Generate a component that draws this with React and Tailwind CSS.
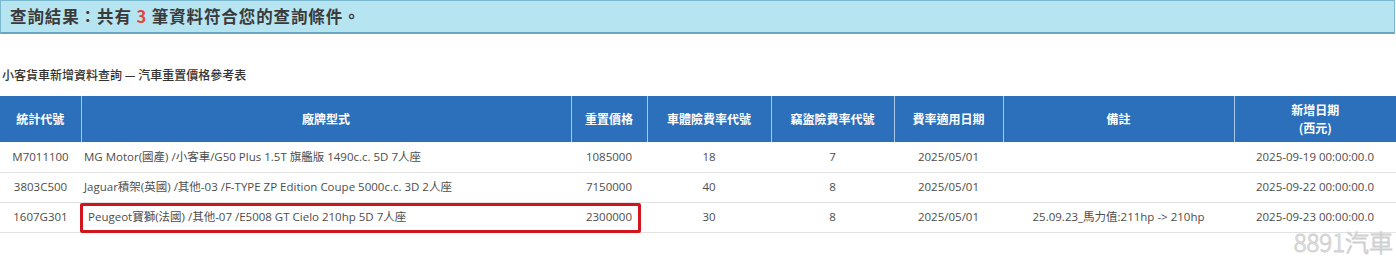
import React from "react";

const rows = [
  {
    code: "M7011100",
    model: "MG Motor(國產) /小客車/G50 Plus 1.5T 旗艦版 1490c.c. 5D 7人座",
    price: "1085000",
    body: "18",
    theft: "7",
    date: "2025/05/01",
    note: "",
    added: "2025-09-19 00:00:00.0",
    hl: false,
  },
  {
    code: "3803C500",
    model: "Jaguar積架(英國) /其他-03 /F-TYPE ZP Edition Coupe 5000c.c. 3D 2人座",
    price: "7150000",
    body: "40",
    theft: "8",
    date: "2025/05/01",
    note: "",
    added: "2025-09-22 00:00:00.0",
    hl: false,
  },
  {
    code: "1607G301",
    model: "Peugeot寶獅(法國) /其他-07 /E5008 GT Cielo 210hp 5D 7人座",
    price: "2300000",
    body: "30",
    theft: "8",
    date: "2025/05/01",
    note: "25.09.23_馬力值:211hp -> 210hp",
    added: "2025-09-23 00:00:00.0",
    hl: true,
  },
];

const font = "font-['Open_Sans','Noto_Sans_CJK_TC',sans-serif]";

export default function App() {
  return (
    <div className={`relative w-[1396px] h-[256px] bg-white overflow-hidden ${font}`}>
      <div className="w-[1395px] h-[34px] bg-[#b6e4f1] border border-[#7ab8cf] border-b-2 border-b-[#6aa6bd] flex items-center pl-[9px]">
        <span className="text-[16.5px] font-bold text-[#3a3a3a] tracking-[0.9px] font-['Noto_Sans_CJK_TC',sans-serif]">
          查詢結果：共有 <span className="text-[#e2443c]">3</span> 筆資料符合您的查詢條件。
        </span>
      </div>

      <div className="mt-[32px] pl-[2px] text-[12px] font-medium text-[#333] font-['Noto_Sans_CJK_TC',sans-serif] leading-[18px]">
        小客貨車新增資料查詢 — 汽車重置價格參考表
      </div>

      <div className="relative mt-[12px]">
        <table className="table-fixed border-collapse w-[1396px] text-[11.5px] text-[#4d4d4d]">
          <colgroup>
            <col className="w-[81px]" />
            <col className="w-[490px]" />
            <col className="w-[76px]" />
            <col className="w-[124px]" />
            <col className="w-[123px]" />
            <col className="w-[109px]" />
            <col className="w-[231px]" />
            <col className="w-[162px]" />
          </colgroup>
          <thead>
            <tr className="h-[46px] bg-[#2c6fba] text-white text-[12px] font-bold font-['Noto_Sans_CJK_TC',sans-serif]">
              <th className="border-r border-[#a9c9ea] font-bold">統計代號</th>
              <th className="border-r border-[#a9c9ea] font-bold">廠牌型式</th>
              <th className="border-r border-[#a9c9ea] font-bold">重置價格</th>
              <th className="border-r border-[#a9c9ea] font-bold">車體險費率代號</th>
              <th className="border-r border-[#a9c9ea] font-bold">竊盜險費率代號</th>
              <th className="border-r border-[#a9c9ea] font-bold">費率適用日期</th>
              <th className="border-r border-[#a9c9ea] font-bold">備註</th>
              <th className="font-bold leading-[18px]">
                新增日期
                <br />
                (西元)
              </th>
            </tr>
          </thead>
          <tbody>
            {rows.map((r) => (
              <tr key={r.code} className="h-[30px] border-b border-[#e2e2e2]">
                <td className="text-center">{r.code}</td>
                <td className={r.hl ? "pl-[7px]" : "pl-[3px]"}>{r.model}</td>
                <td className="text-right pr-[15px]">{r.price}</td>
                <td className="text-center">{r.body}</td>
                <td className="text-center">{r.theft}</td>
                <td className="text-center">{r.date}</td>
                <td className="text-center">{r.note}</td>
                <td className="text-center">{r.added}</td>
              </tr>
            ))}
          </tbody>
        </table>
        <div className="absolute left-[80px] top-[107px] w-[561px] h-[30px] border-[3px] border-[#d2141c] rounded-[2px] pointer-events-none" />
      </div>

      <div className="absolute right-[3px] bottom-[1px] text-[24px] leading-[26px] font-light text-white [-webkit-text-stroke:1px_#d0d0d0] font-['Noto_Sans_CJK_TC',sans-serif]">
        8891汽車
      </div>
    </div>
  );
}
